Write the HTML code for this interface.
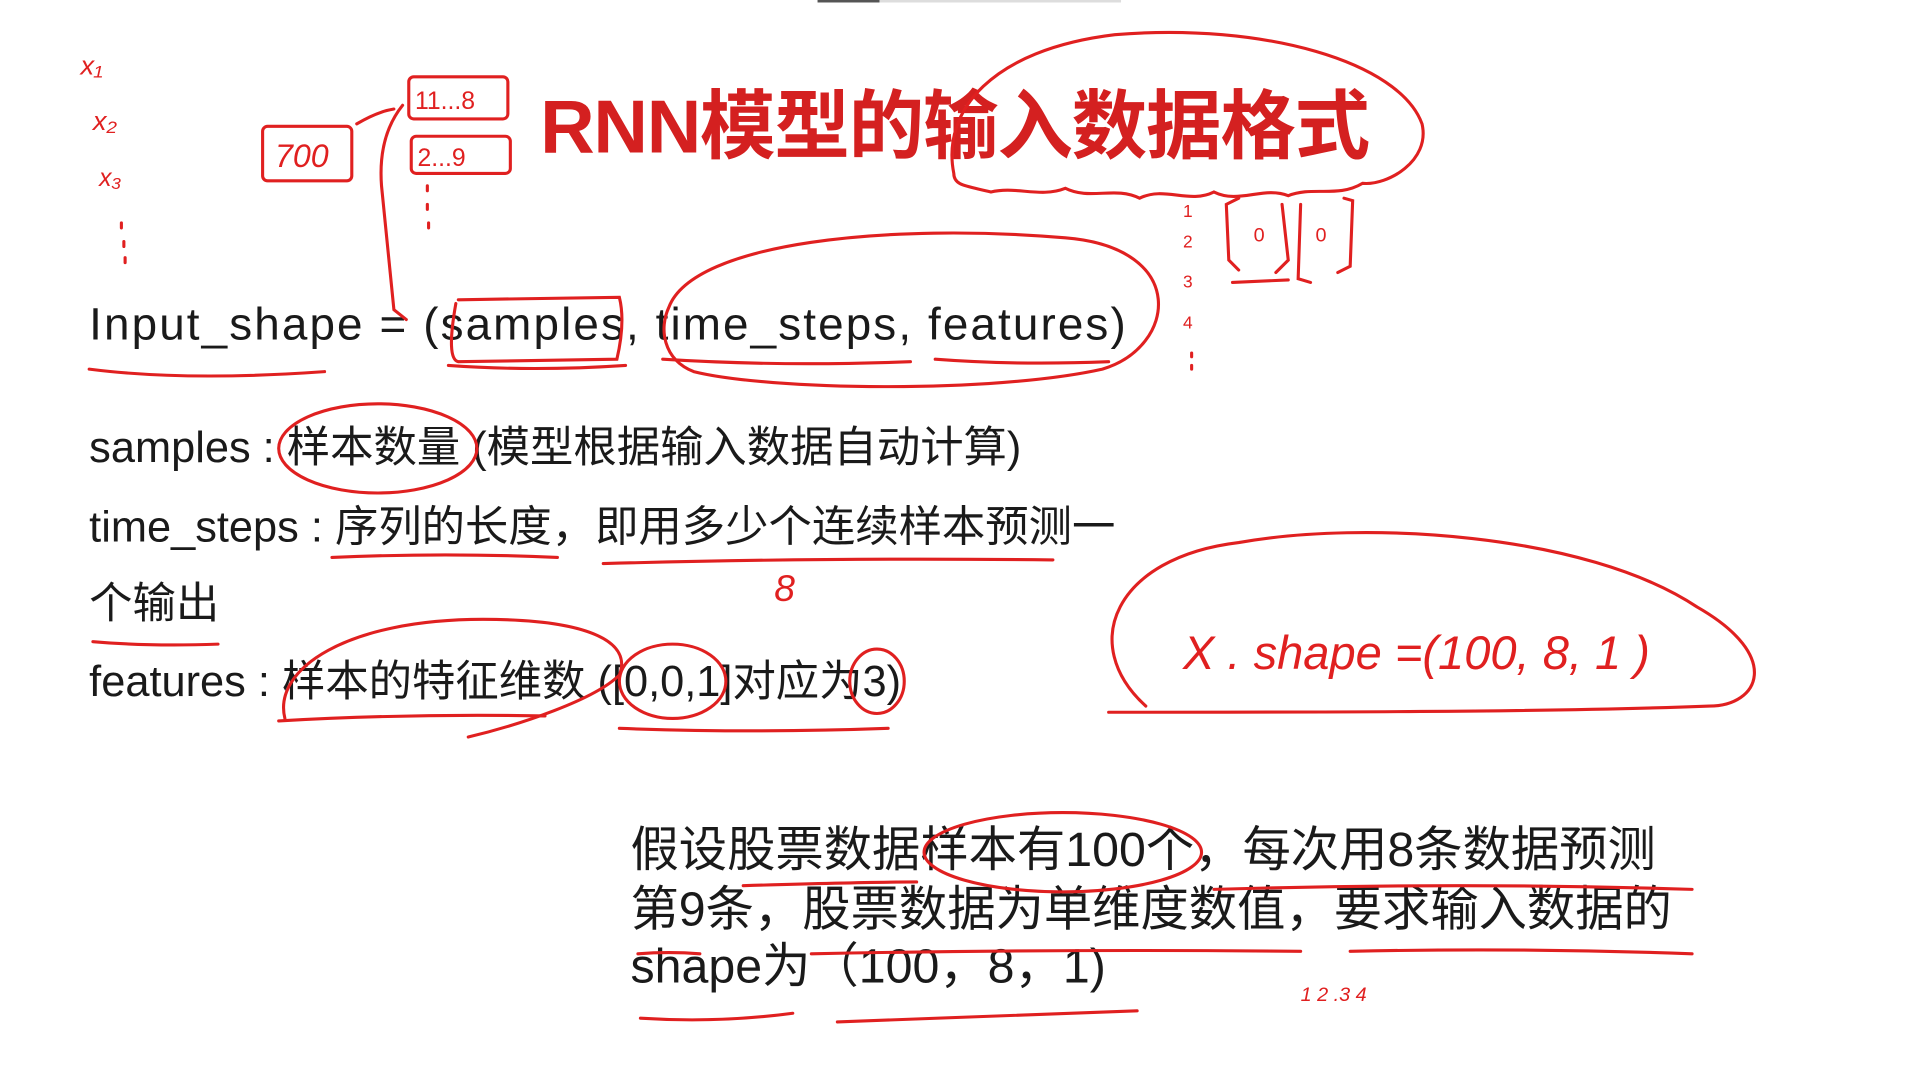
<!DOCTYPE html>
<html><head><meta charset="utf-8"><style>
html,body{margin:0;padding:0;background:#fff;width:1920px;height:1080px;overflow:hidden}
#wrap{position:absolute;left:0;top:0;width:1550px;height:872px;transform:scale(1.2387);transform-origin:0 0;font-family:"Liberation Sans","Noto Sans CJK SC",sans-serif;color:#1a1a1a}
.t{position:absolute;white-space:nowrap;line-height:1}
.title{left:436px;top:72px;font-size:61px;font-weight:bold;color:#d42020;letter-spacing:-1px}
.l{font-size:35px;left:72px}
.p{font-size:39px;left:509px}
svg{position:absolute;left:0;top:0}
</style></head><body><div id="wrap">
<div style="position:absolute;left:660px;top:0;width:245px;height:2px;background:#ddd"></div>
<div style="position:absolute;left:660px;top:0;width:50px;height:2px;background:#555"></div>
<div class="t title">RNN模型的输入数据格式</div>
<div class="t l" style="top:243px;font-size:37px;letter-spacing:1.7px">Input_shape = (samples, time_steps, features)</div>
<div class="t l" style="top:344px">samples : 样本数量 (模型根据输入数据自动计算)</div>
<div class="t l" style="top:408px">time_steps : 序列的长度，即用多少个连续样本预测一</div>
<div class="t l" style="top:470px">个输出</div>
<div class="t l" style="top:533px">features : 样本的特征维数 ([0,0,1]对应为3)</div>
<div class="t p" style="top:667px">假设股票数据样本有100个，每次用8条数据预测</div>
<div class="t p" style="top:715px">第9条，股票数据为单维度数值，要求输入数据的</div>
<div class="t p" style="top:761px">shape为（100，8，1)</div>
<svg width="1550" height="872" viewBox="0 0 1550 872" fill="none" stroke="#e02020" stroke-width="2.5" stroke-linecap="round">
<path d="M770 140 C760 90 800 40 900 28 C1020 18 1130 50 1148 100 C1155 130 1120 150 1100 148 C1080 160 1060 150 1040 158 C1020 150 1000 165 980 155 C960 165 940 150 920 160 C900 150 880 162 860 152 C840 160 820 150 800 155 C780 150 770 150 770 140"/>
<text x="65" y="60" font-size="22" fill="#e02020" stroke="none" font-style="italic">x₁</text>
<text x="75" y="105" font-size="22" fill="#e02020" stroke="none" font-style="italic">x₂</text>
<text x="80" y="150" font-size="20" fill="#e02020" stroke="none" font-style="italic">x₃</text>
<path d="M98 180 v4 M100 195 v4 M101 208 v4"/>
<rect x="212" y="102" width="72" height="44" rx="4"/>
<text x="222" y="135" font-size="26" fill="#e02020" stroke="none" font-style="italic">700</text>
<path d="M288 100 Q305 90 318 88"/>
<rect x="330" y="62" width="80" height="34" rx="4"/>
<text x="335" y="88" font-size="20" fill="#e02020" stroke="none">11...8</text>
<rect x="332" y="110" width="80" height="30" rx="4"/>
<text x="337" y="134" font-size="20" fill="#e02020" stroke="none">2...9</text>
<path d="M325 85 Q305 110 308 150 L318 250 L328 258 M345 150 v4 M345 165 v4 M346 180 v4"/>
<text x="955" y="175" font-size="14" fill="#e02020" stroke="none">1</text>
<text x="955" y="200" font-size="14" fill="#e02020" stroke="none">2</text>
<text x="955" y="232" font-size="14" fill="#e02020" stroke="none">3</text>
<text x="955" y="265" font-size="14" fill="#e02020" stroke="none">4</text>
<path d="M962 285 v3 M962 295 v3"/>
<path d="M1000 160 L990 165 L992 210 L1000 218 M1035 165 L1040 210 L1030 220 M1050 165 L1048 225 L1058 228 M1085 160 L1092 162 L1090 215 L1080 220 M995 228 L1040 226"/>
<text x="1012" y="195" font-size="16" fill="#e02020" stroke="none">0</text>
<text x="1062" y="195" font-size="16" fill="#e02020" stroke="none">0</text>
<path d="M72 298 Q150 308 262 300"/>
<path d="M368 245 Q360 290 370 292 L498 290 Q505 260 500 240 L370 242"/>
<path d="M362 295 Q430 300 505 295"/>
<path d="M540 248 C560 195 720 180 860 192 C960 200 950 280 890 298 C800 318 620 315 560 300 C535 290 532 265 540 248"/>
<path d="M535 290 Q630 296 735 292 M755 290 Q820 295 895 292"/>
<ellipse cx="305" cy="362" rx="80" ry="36"/>
<path d="M268 450 Q360 446 450 450 M487 455 Q660 450 850 452"/>
<text x="625" y="485" font-size="30" fill="#e02020" stroke="none" font-style="italic">8</text>
<path d="M75 518 Q120 522 176 520"/>
<path d="M230 580 C220 540 280 500 390 500 C480 500 510 520 500 545 C480 565 420 585 378 595"/>
<path d="M225 582 Q330 576 440 578"/>
<ellipse cx="543" cy="550" rx="43" ry="30"/>
<ellipse cx="708" cy="550" rx="22" ry="26"/>
<path d="M500 588 Q610 592 717 588"/>
<path d="M925 570 C870 520 900 450 1000 438 C1100 420 1280 430 1370 490 C1440 530 1420 570 1380 570 C1250 575 1050 575 895 575"/>
<text x="955" y="540" font-size="38" fill="#e02020" stroke="none" font-style="italic">X . shape =(100, 8, 1 )</text>
<ellipse cx="858" cy="688" rx="112" ry="32"/>
<path d="M600 715 Q700 712 740 712 M980 718 Q1180 712 1366 718 M515 770 Q540 768 565 770 M655 770 Q850 766 1050 768 M1090 768 Q1230 765 1366 770 M517 822 Q580 826 640 818 M676 825 Q800 820 918 816"/>
<text x="1050" y="808" font-size="16" fill="#e02020" stroke="none" font-style="italic">1 2 .3 4</text>
</svg>
</div></body></html>
